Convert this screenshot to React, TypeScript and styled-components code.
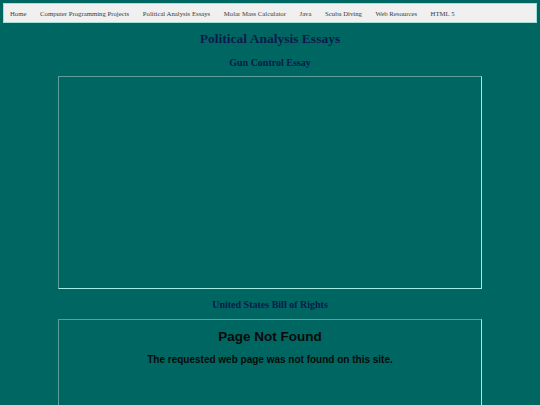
import styled, { createGlobalStyle } from "styled-components";

const GlobalStyle = createGlobalStyle`
    html, body {
        margin: 0;
        padding: 0;
        background: #006661;
    }
    body {
        padding: 3px;
        font-family: "Liberation Serif", "Times New Roman", serif;
    }
`;

const links = [
    "Home",
    "Computer Programming Projects",
    "Political Analysis Essays",
    "Molar Mass Calculator",
    "Java",
    "Scuba Diving",
    "Web Resources",
    "HTML 5",
];

const NavBar = styled.nav`
    display: flex;
    align-items: center;
    gap: 13.5px;
    height: 18px;
    padding: 0 6px;
    background: #f0f0f0;
    border: 1px solid #9fe0d8;
`;

const NavLink = styled.a`
    font-size: 6.75px;
    color: #3a3a3a;
    text-decoration: none;
    white-space: nowrap;
    -webkit-font-smoothing: antialiased;
`;

const Title = styled.h1`
    margin: 8px 0 0;
    text-align: center;
    font-size: 13.5px;
    font-weight: bold;
    color: #0b1a4c;
`;

const SubTitle = styled.h2<{ $top: number }>`
    margin: ${({ $top }) => $top}px 0 0;
    text-align: center;
    font-size: 10px;
    font-weight: bold;
    color: #0b1a4c;
`;

const Frame = styled.div<{ $height: number; $top: number }>`
    box-sizing: border-box;
    width: 424px;
    height: ${({ $height }) => $height}px;
    margin: ${({ $top }) => $top}px auto 0;
    border: 1px solid;
    border-color: #5e9e9a #a6ece4 #a6ece4 #5e9e9a;
    font-family: "Liberation Sans", Arial, sans-serif;
    text-align: center;
    color: #0a0a0a;
`;

const FrameHeading = styled.h1`
    margin: 9px 0 0;
    font-size: 13.5px;
    font-weight: bold;
`;

const FrameText = styled.p`
    margin: 10px 0 0;
    font-size: 10px;
    font-weight: bold;
`;

export default function App() {
    return (
        <>
            <GlobalStyle />
            <NavBar>
                {links.map((l) => (
                    <NavLink key={l} href="#">
                        {l}
                    </NavLink>
                ))}
            </NavBar>
            <Title>Political Analysis Essays</Title>
            <SubTitle $top={10}>Gun Control Essay</SubTitle>
            <Frame $height={213} $top={8} />
            <SubTitle $top={10}>United States Bill of Rights</SubTitle>
            <Frame $height={120} $top={9}>
                <FrameHeading>Page Not Found</FrameHeading>
                <FrameText>The requested web page was not found on this site.</FrameText>
            </Frame>
        </>
    );
}
